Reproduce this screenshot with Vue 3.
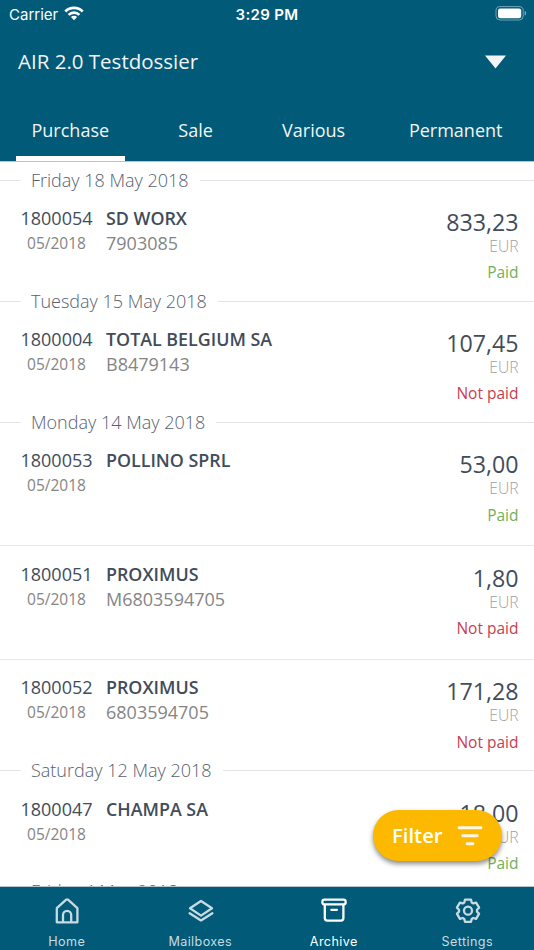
<template>
  <div class="screen">
    <header class="header">
      <div class="status">
        <div class="carrier">
          <span>Carrier</span>
          <svg width="20" height="16" viewBox="0 0 20 16" fill="none" stroke="#fff" stroke-width="2.6">
            <path d="M1.3 6.500a12.200 12.200 0 0 1 17.400 0" />
            <path d="M4.600 9.900a7.600 7.600 0 0 1 10.800 0" />
            <path d="M10 15.300l-3.100-3.200a4.400 4.400 0 0 1 6.200 0z" fill="#fff" stroke="none" />
          </svg>
        </div>
        <span class="time">3:29 PM</span>
        <svg class="battery" width="32" height="15" viewBox="0 0 32 15">
          <rect x="1" y="0.6" width="27.200" height="13.400" rx="4" fill="none" stroke="#fff" stroke-opacity="0.45" />
          <rect x="3" y="2.400" width="23.200" height="9.800" rx="2.200" fill="#fff" />
          <path d="M29.700 5v4.600c1-.4 1.500-1.200 1.500-2.300s-.5-1.900-1.500-2.300z" fill="#fff" fill-opacity="0.5" />
        </svg>
      </div>
      <div class="dossier">
        <span>AIR 2.0 Testdossier</span>
        <svg width="21" height="14" viewBox="0 0 21 14">
          <path d="M0 0.500h21l-10.500 13z" fill="#f4f4f4" />
        </svg>
      </div>
      <nav class="tabs">
        <button
          v-for="tab in tabs"
          :key="tab"
          :class="['tab', { active: tab === activeTab }]"
          @click="activeTab = tab"
        >{{ tab }}</button>
      </nav>
    </header>

    <main class="list">
      <section v-for="group in groups" :key="group.date">
        <h2 class="date"><span>{{ group.date }}</span></h2>
        <article v-for="item in group.items" :key="item.number" class="entry">
          <div class="document">
            <div class="number">{{ item.number }}</div>
            <div class="period">{{ item.period }}</div>
          </div>
          <div class="company">
            <div class="name">{{ item.name }}</div>
            <div class="reference">{{ item.reference }}</div>
          </div>
          <div class="total">
            <div class="amount">{{ item.amount }}</div>
            <div class="currency">EUR</div>
            <div :class="['state', { paid: item.paid }]">{{ item.paid ? 'Paid' : 'Not paid' }}</div>
          </div>
        </article>
      </section>
    </main>

    <button class="filter">
      <span>Filter</span>
      <svg width="26" height="20" viewBox="0 0 26 20" stroke="#fff8e6" stroke-width="2.900" stroke-linecap="round">
        <path d="M2 1.700h22M5.700 9.700h14.600M10 17.700h6" />
      </svg>
    </button>

    <nav class="bottom">
      <a class="link">
        <svg width="28" height="28" viewBox="0 0 28 28">
          <path d="M3.800 25.300V11.200L13.200 2.700q.9-.7 1.800 0l9.400 8.500v14.100zM10 25V18a4 4 0 0 1 8.200 0V25" />
        </svg>
        <span>Home</span>
      </a>
      <a class="link">
        <svg width="28" height="28" viewBox="0 0 28 28">
          <path d="M14 4L25 11.300 14 18.600 3 11.300z" />
          <path d="M2.600 16.300L14 23.400l11.400-7.100" />
        </svg>
        <span>Mailboxes</span>
      </a>
      <a class="link active">
        <svg width="28" height="28" viewBox="0 0 28 28">
          <rect x="2.400" y="2.600" width="23.200" height="4.800" rx="2" />
          <path d="M4.800 7.800v13.300q0 2.500 2.500 2.500h13.600q2.500 0 2.500-2.500V7.800M11.300 12.800h5.600" />
        </svg>
        <span>Archive</span>
      </a>
      <a class="link">
        <svg width="28" height="28" viewBox="0 0 28 28">
          <circle cx="14" cy="13.700" r="4" />
          <path d="M11 2.600h6l.7 2.900 1.600.9 2.800-.8 3 5.100-2.100 2.100v1.800l2.100 2.100-3 5.100-2.800-.8-1.600.9-.7 2.900h-6l-.7-2.900-1.600-.9-2.800.8-3-5.100 2.100-2.100v-1.800l-2.100-2.100 3-5.100 2.800.8 1.600-.9z" />
        </svg>
        <span>Settings</span>
      </a>
    </nav>
  </div>
</template>

<script setup>
import { ref } from "vue";

const tabs = ["Purchase", "Sale", "Various", "Permanent"];
const activeTab = ref("Purchase");

// Documents grouped by booking date
const groups = [
  {
    date: "Friday 18 May 2018",
    items: [
      { number: "1800054", period: "05/2018", name: "SD WORX", reference: "7903085", amount: "833,23", paid: true },
    ],
  },
  {
    date: "Tuesday 15 May 2018",
    items: [
      { number: "1800004", period: "05/2018", name: "TOTAL BELGIUM SA", reference: "B8479143", amount: "107,45", paid: false },
    ],
  },
  {
    date: "Monday 14 May 2018",
    items: [
      { number: "1800053", period: "05/2018", name: "POLLINO SPRL", reference: "", amount: "53,00", paid: true },
      { number: "1800051", period: "05/2018", name: "PROXIMUS", reference: "M6803594705", amount: "1,80", paid: false },
      { number: "1800052", period: "05/2018", name: "PROXIMUS", reference: "6803594705", amount: "171,28", paid: false },
    ],
  },
  {
    date: "Saturday 12 May 2018",
    items: [
      { number: "1800047", period: "05/2018", name: "CHAMPA SA", reference: "", amount: "18,00", paid: true },
    ],
  },
  { date: "Friday 4 May 2018", items: [] },
];
</script>

<style>
body {
  margin: 0;
  overflow: hidden;
}
</style>

<style scoped>
.screen {
  position: relative;
  display: flex;
  flex-direction: column;
  width: 534px;
  height: 950px;
  overflow: hidden;
  background: #fff;
  color: #414c5a;
  font-family: "Open Sans", "Noto Sans", sans-serif;
}
button {
  padding: 0;
  border: none;
  font-family: inherit;
  cursor: pointer;
}
.header {
  flex: none;
  box-sizing: border-box;
  height: 162px;
  border-bottom: 1px solid #b9c4ca;
  background: #005a78;
  color: #f4f4f4;
}
.status {
  display: grid;
  grid-template-columns: 1fr auto 1fr;
  align-items: center;
  height: 28px;
  padding: 0 7px 0 9px;
  color: #fff;
  font-family: Inter, sans-serif;
  font-size: 15px;
}
.carrier {
  display: flex;
  align-items: center;
  gap: 6px;
}
.carrier svg {
  margin-top: -3px;
}
.time {
  margin-right: 2px;
  font-weight: 600;
  letter-spacing: 0.35px;
}
.battery {
  justify-self: end;
  margin-top: -1px;
}
.dossier {
  display: flex;
  align-items: center;
  justify-content: space-between;
  height: 68px;
  padding: 0 28.500px 0 18px;
  font-size: 20.500px;
}
.dossier span {
  margin-top: -3px;
}
.tabs {
  display: flex;
  justify-content: space-between;
  height: 65px;
  padding: 0 16px;
}
.tab {
  box-sizing: border-box;
  height: 65px;
  padding: 7px 15.500px 0;
  border-bottom: 5px solid transparent;
  background: none;
  color: #f4f4f4;
  font-size: 18px;
}
.tab:nth-child(2) {
  padding-left: 21px;
}
.tab:nth-child(3) {
  padding-left: 21px;
}
.tab.active {
  border-bottom-color: #fff;
}
.list {
  flex: 1;
  min-height: 0;
  overflow: hidden;
  padding-top: 8px;
}
.date {
  display: flex;
  align-items: center;
  gap: 10px;
  height: 20px;
  margin: 0;
  color: #566170;
  font-size: 18px;
  font-weight: 300;
  white-space: nowrap;
}
.date span {
  margin: -1px 1px 0 0;
}
section:last-child .date {
  margin-top: -1px;
}
.date::before,
.date::after {
  content: "";
  width: 21px;
  height: 1px;
  background: #e4e4e4;
}
.date::after {
  flex: 1;
}
.entry {
  display: flex;
  box-sizing: border-box;
  height: 101.300px;
  padding: 15.700px 15.500px 0 16px;
}
.entry + .entry {
  height: 102.300px;
  margin-top: 11.200px;
  border-top: 1px solid #e8e8e8;
}
.document {
  width: 81px;
  text-align: center;
}
.company {
  flex: 1;
  padding-left: 9px;
}
.number,
.name,
.reference {
  height: 25px;
  font-size: 18px;
  line-height: 25px;
}
.name {
  font-size: 17.850px;
  font-weight: 600;
}
.period {
  color: #858585;
  font-size: 15.500px;
  line-height: 25px;
}
.reference {
  color: #858585;
}
.total {
  text-align: right;
}
.amount {
  padding-top: 3px;
  font-size: 23.200px;
  line-height: 26px;
}
.currency {
  color: #a0a0a0;
  font-size: 15.700px;
  font-weight: 300;
  line-height: 22px;
}
.state {
  padding-top: 4.500px;
  color: #c83e50;
  font-size: 15.500px;
  line-height: 22px;
}
.state.paid {
  color: #70b15b;
}
.filter {
  position: absolute;
  top: 810px;
  left: 373px;
  display: flex;
  align-items: center;
  justify-content: space-between;
  box-sizing: border-box;
  width: 129px;
  height: 51px;
  padding: 0 19px;
  border-radius: 26px;
  background: #fcb900;
  box-shadow: 0 3px 5px rgba(0, 0, 0, 0.45);
  color: #fff;
  font-size: 20.300px;
  font-weight: 600;
}
.filter span {
  margin-top: -1px;
}
.bottom {
  display: grid;
  flex: none;
  grid-template-columns: repeat(4, 1fr);
  box-sizing: border-box;
  height: 64px;
  border-top: 1px solid #b9c4ca;
  background: #005a78;
}
.link {
  display: flex;
  flex-direction: column;
  align-items: center;
  padding: 10px 0 0 1px;
  color: #c9dae1;
  font-family: Inter, sans-serif;
  font-size: 12.600px;
  letter-spacing: 0.4px;
}
.link span {
  margin: 8px 1px 0 0;
  line-height: 18px;
}
.link svg {
  fill: none;
  stroke: currentColor;
  stroke-width: 2.300;
  stroke-linecap: round;
  stroke-linejoin: round;
}
.link.active {
  color: #fff;
}
</style>
